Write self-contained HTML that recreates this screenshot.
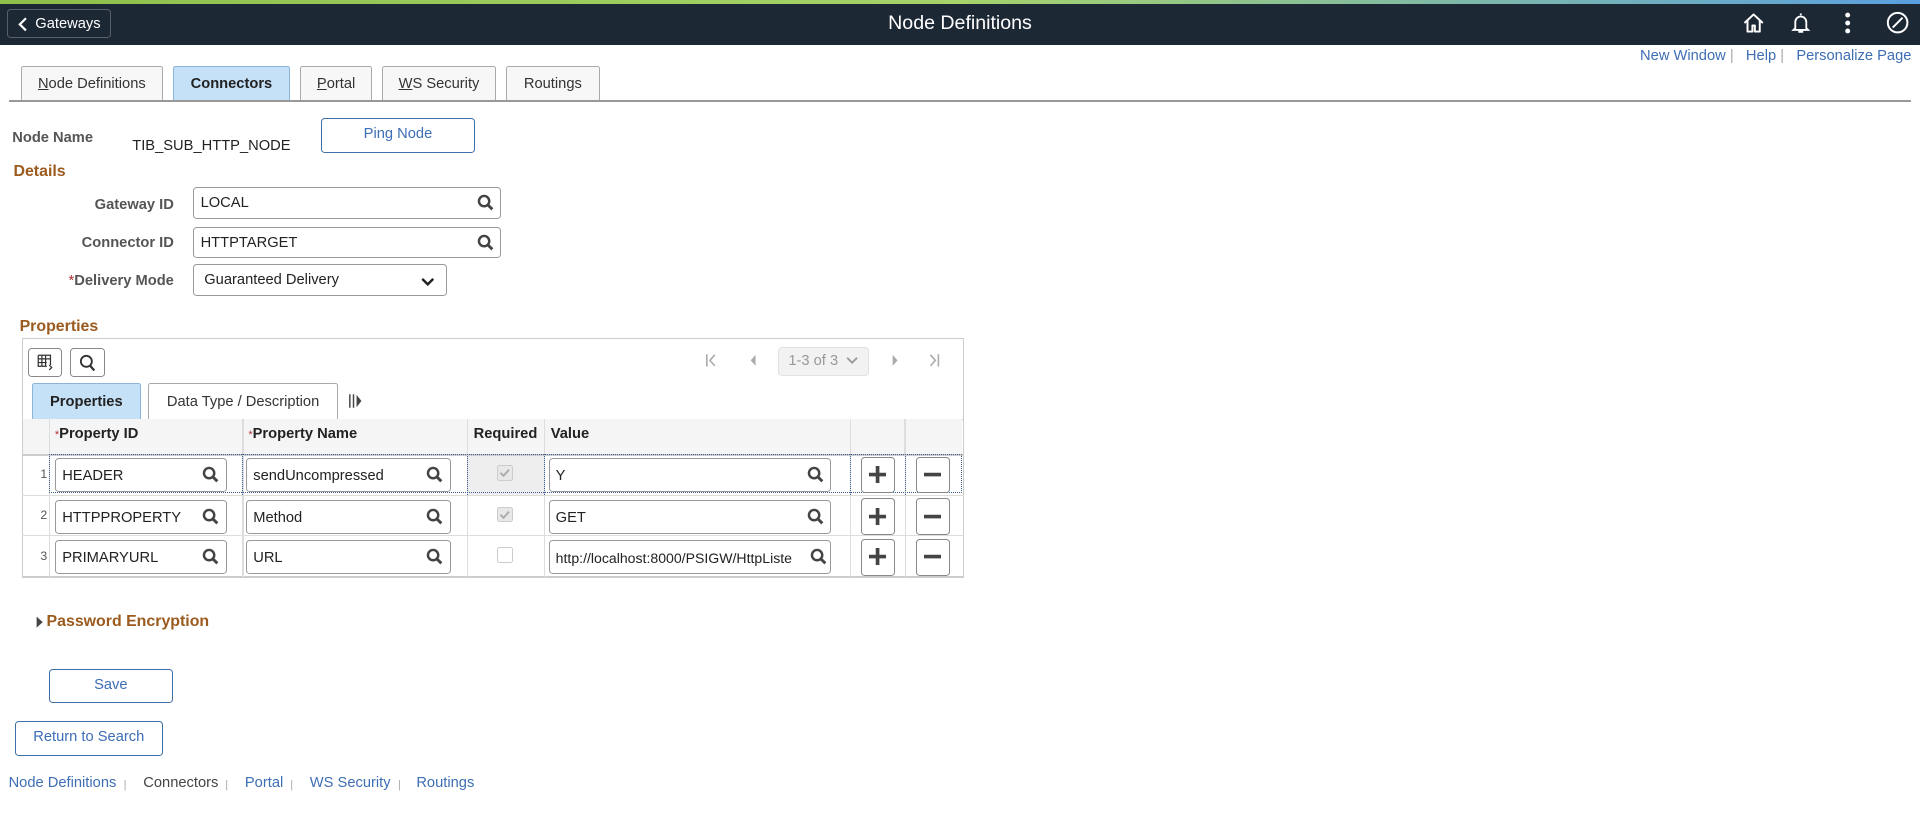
<!DOCTYPE html>
<html><head><meta charset="utf-8"><style>
html,body{margin:0;padding:0;background:#fff;overflow:hidden;width:1920px;height:831px}
#w{position:relative;width:1568px;height:679px;zoom:1.2245;font-family:"Liberation Sans",Arial,sans-serif;font-size:12px;color:#333}
.a{position:absolute}
.hdr{left:0;top:0;width:1568px;height:37px;background:#1d2835}
.stripe{left:0;top:0;width:1568px;height:3px;background:linear-gradient(90deg,#8cc04a,#a6d36a 50%,#5aa0e0)}
.gw{left:6px;top:7px;width:85px;height:24px;border:1px solid #56606d;border-radius:3px;color:#fff;font-size:12px;line-height:24px;box-sizing:border-box;padding-left:22px}
.title{left:0;top:0;width:1568px;text-align:center;color:#fff;font-size:16px;line-height:38px}
.lnk{color:#3e6eb5}
.tab{top:54px;height:29px;border:1px solid #aaa;border-bottom:none;background:#f7f7f7;box-sizing:border-box;text-align:center;line-height:28px;font-size:12px;color:#333;border-radius:2px 2px 0 0}
.tab.on{background:#c5e1f8;font-weight:bold;border-color:#8ab4d8;color:#222}
.lbl{font-weight:bold;color:#555;text-align:right}
.inp{border:1px solid #999;border-radius:3px;box-sizing:border-box;background:#fff;height:26px;line-height:26px;padding-left:5px;color:#222}
.btn{border:1px solid #3e6ea8;border-radius:3px;box-sizing:border-box;color:#3e6eb5;text-align:center;background:#fff}
.sec{color:#9b5a1e;font-weight:bold;font-size:13px}
.mg{position:absolute;right:5px;top:5px}
.th{top:342px;height:29px;line-height:26px;font-weight:bold;color:#222;background:#f5f5f5}
.pm{width:28px;height:30px;border:1px solid #888;border-radius:3px;box-sizing:border-box;background:#fff}
.sep{color:#aaa;font-size:9px}
</style></head><body><div id="w">
<div class="a hdr"></div><div class="a stripe"></div>
<div class="a gw"><svg class="a" style="left:8px;top:6px" width="8" height="12" viewBox="0 0 8 12"><path d="M6.5 1L1.5 6l5 5" stroke="#fff" stroke-width="1.8" fill="none"/></svg>Gateways</div>
<div class="a title">Node Definitions</div>
<svg class="a" style="left:1423px;top:10px" width="19" height="18" viewBox="0 0 19 18"><path d="M2 9L9.5 2 17 9M4.5 7v9h4v-5h2v5h4V7" stroke="#fff" stroke-width="1.6" fill="none" stroke-linejoin="round"/></svg>
<svg class="a" style="left:1463px;top:9px" width="16" height="19" viewBox="0 0 16 19"><path d="M8 2v1.5M3.5 14V9a4.5 4.5 0 019 0v5l1.5 1.5H2L3.5 14zM6 17h4" stroke="#fff" stroke-width="1.5" fill="none"/></svg>
<svg class="a" style="left:1506px;top:10px" width="6" height="18"><circle cx="3" cy="2.5" r="2" fill="#fff"/><circle cx="3" cy="9" r="2" fill="#fff"/><circle cx="3" cy="15.5" r="2" fill="#fff"/></svg>
<svg class="a" style="left:1540px;top:9px" width="19" height="19" viewBox="0 0 19 19"><circle cx="9.5" cy="9.5" r="8" stroke="#fff" stroke-width="1.6" fill="none"/><path d="M13.5 5.5L5.5 13.5" stroke="#fff" stroke-width="1.6"/></svg>
<div class="a" style="right:7px;top:39px;font-size:12px"><span class="lnk">New Window</span> <span style="color:#aaa">|</span> &nbsp; <span class="lnk">Help</span> <span style="color:#aaa">|</span> &nbsp; <span class="lnk">Personalize Page</span></div>
<div class="a tab" style="left:17px;width:116px"><u>N</u>ode Definitions</div>
<div class="a tab on" style="left:141px;width:96px">Connectors</div>
<div class="a tab" style="left:245px;width:59px"><u>P</u>ortal</div>
<div class="a tab" style="left:312px;width:93px"><u>W</u>S Security</div>
<div class="a tab" style="left:413px;width:77px">Routings</div>
<div class="a" style="left:7px;top:82px;width:1554px;height:1px;background:#999"></div>
<div class="a" style="left:10px;top:106px;font-weight:bold;color:#555">Node Name</div>
<div class="a" style="left:108px;top:113px;color:#222">TIB_SUB_HTTP_NODE</div>
<div class="a btn" style="left:262px;top:96px;width:126px;height:29px;line-height:26px">Ping Node</div>
<div class="a sec" style="left:11px;top:133px">Details</div>
<div class="a lbl" style="left:20px;width:122px;top:161px">Gateway ID</div>
<div class="a inp" style="left:158px;top:153px;width:251px">LOCAL<svg class="mg" width="14" height="14" viewBox="0 0 14 14"><circle cx="5.8" cy="5.8" r="4.2" stroke="#444" stroke-width="2" fill="none"/><path d="M9 9l3.5 3.5" stroke="#444" stroke-width="2.4"/></svg></div>
<div class="a lbl" style="left:20px;width:122px;top:192px">Connector ID</div>
<div class="a inp" style="left:158px;top:185px;width:251px">HTTPTARGET<svg class="mg" width="14" height="14" viewBox="0 0 14 14"><circle cx="5.8" cy="5.8" r="4.2" stroke="#444" stroke-width="2" fill="none"/><path d="M9 9l3.5 3.5" stroke="#444" stroke-width="2.4"/></svg></div>
<div class="a lbl" style="left:20px;width:122px;top:223px"><span style="color:#b03030;font-weight:normal">*</span>Delivery Mode</div>
<div class="a inp" style="left:158px;top:216px;width:207px;padding-left:8px">Guaranteed Delivery<svg class="a" style="right:9px;top:9px" width="11" height="8" viewBox="0 0 11 8"><path d="M1 1.5l4.5 4.5L10 1.5" stroke="#222" stroke-width="2" fill="none"/></svg></div>
<div class="a sec" style="left:16px;top:260px">Properties</div>
<div class="a" style="left:18px;top:276px;width:769px;height:196px;border:1px solid #ccc;box-sizing:border-box"></div>
<div class="a" style="left:23px;top:284px;width:28px;height:24px;border:1px solid #888;border-radius:3px;box-sizing:border-box"><svg class="a" style="left:6px;top:4px" width="14" height="14" viewBox="0 0 14 14"><path d="M1 1h10v8M1 1v9h7M1 4h10M1 7h7M4 1v9M7 1v9M10 9l2 2-2 2" stroke="#333" stroke-width="1" fill="none"/></svg></div>
<div class="a" style="left:57px;top:284px;width:29px;height:24px;border:1px solid #888;border-radius:3px;box-sizing:border-box"><svg class="a" style="left:7px;top:4px" width="14" height="15" viewBox="0 0 14 15"><circle cx="6" cy="6" r="4.5" stroke="#333" stroke-width="1.5" fill="none"/><path d="M9 9.5l3.5 4" stroke="#333" stroke-width="1.8"/></svg></div>
<svg class="a" style="left:576px;top:288px" width="10" height="12"><path d="M1.5 1v10M8 1.5L4 6l4 4.5" stroke="#aaa" stroke-width="1.3" fill="none"/></svg>
<svg class="a" style="left:610px;top:288px" width="10" height="12"><path d="M7 1.5L3 6l4 4.5z" fill="#aaa"/></svg>
<div class="a" style="left:635px;top:283px;width:75px;height:24px;background:#f2f2f2;border:1px solid #e2e2e2;border-radius:3px;box-sizing:border-box;color:#999;line-height:22px;padding-left:8px">1-3 of 3 <svg width="10" height="7" viewBox="0 0 10 7" style="margin-left:3px"><path d="M1 1.5l4 4 4-4" stroke="#999" stroke-width="1.5" fill="none"/></svg></div>
<svg class="a" style="left:726px;top:288px" width="10" height="12"><path d="M3 1.5L7 6l-4 4.5z" fill="#aaa"/></svg>
<svg class="a" style="left:758px;top:288px" width="10" height="12"><path d="M8.5 1v10M2 1.5L6 6l-4 4.5" stroke="#aaa" stroke-width="1.3" fill="none"/></svg>
<div class="a tab on" style="left:26px;top:313px;width:89px;height:30px;line-height:30px">Properties</div>
<div class="a tab" style="left:121px;top:313px;width:155px;height:30px;line-height:30px;background:#fff">Data Type / Description</div>
<svg class="a" style="left:284px;top:321px" width="12" height="13"><path d="M1.5 1v11M4.5 1v11" stroke="#444" stroke-width="1.2"/><path d="M7 1.5l4 5-4 5z" fill="#444"/></svg>
<div class="a" style="left:18px;top:342px;width:769px;height:1px;background:#ccc"></div>
<div class="a th" style="left:19px;width:767px"></div>
<div class="a th" style="left:40px;width:158px;padding-left:4px;border-left:1px solid #ddd;box-sizing:border-box"><span style="color:#b03030;font-weight:normal;font-size:9px">*</span>Property ID</div>
<div class="a th" style="left:198px;width:183px;padding-left:4px;border-left:1px solid #ddd;box-sizing:border-box"><span style="color:#b03030;font-weight:normal;font-size:9px">*</span>Property Name</div>
<div class="a th" style="left:381px;width:63px;padding-left:5px;border-left:1px solid #ddd;box-sizing:border-box">Required</div>
<div class="a th" style="left:444px;width:250px;padding-left:5px;border-left:1px solid #ddd;box-sizing:border-box">Value</div>
<div class="a th" style="left:694px;width:45px;border-left:1px solid #ddd;border-right:1px solid #ddd;box-sizing:border-box"></div>
<div class="a" style="left:18px;top:371px;width:769px;height:1px;background:#ccc"></div>
<div class="a" style="left:18px;top:404px;width:769px;height:1px;background:#ddd"></div>
<div class="a" style="left:18px;top:437px;width:769px;height:1px;background:#ddd"></div>
<div class="a" style="left:18px;top:470px;width:769px;height:2px;background:#ccc"></div>
<div class="a" style="left:40px;top:342px;width:1px;height:129px;background:#ddd"></div>
<div class="a" style="left:198px;top:342px;width:1px;height:129px;background:#ddd"></div>
<div class="a" style="left:381px;top:342px;width:1px;height:129px;background:#ddd"></div>
<div class="a" style="left:444px;top:342px;width:1px;height:129px;background:#ddd"></div>
<div class="a" style="left:694px;top:342px;width:1px;height:129px;background:#ddd"></div>
<div class="a" style="left:739px;top:342px;width:1px;height:129px;background:#ddd"></div>
<div class="a" style="left:382px;top:372px;width:62px;height:32px;background:#eee"></div>
<div class="a" style="left:40px;top:371px;width:746px;height:32px;border:1px dotted #3a5f94;box-sizing:border-box"></div>
<div class="a" style="left:198px;top:371px;width:1px;height:33px;border-left:1px dotted #3a5f94"></div>
<div class="a" style="left:381px;top:371px;width:1px;height:33px;border-left:1px dotted #3a5f94"></div>
<div class="a" style="left:444px;top:371px;width:1px;height:33px;border-left:1px dotted #3a5f94"></div>
<div class="a" style="left:694px;top:371px;width:1px;height:33px;border-left:1px dotted #3a5f94"></div>
<div class="a" style="left:739px;top:371px;width:1px;height:33px;border-left:1px dotted #3a5f94"></div>

<div class="a" style="left:33px;top:381px;font-size:10px;color:#555">1</div>
<div class="a" style="left:33px;top:415px;font-size:10px;color:#555">2</div>
<div class="a" style="left:33px;top:448px;font-size:10px;color:#555">3</div>

<div class="a inp" style="left:45px;top:374px;width:140px;height:28px;line-height:28px">HEADER<svg class="mg" style="top:6px" width="14" height="14" viewBox="0 0 14 14"><circle cx="5.8" cy="5.8" r="4.2" stroke="#444" stroke-width="2" fill="none"/><path d="M9 9l3.5 3.5" stroke="#444" stroke-width="2.4"/></svg></div>
<div class="a inp" style="left:45px;top:408px;width:140px;height:28px;line-height:28px">HTTPPROPERTY<svg class="mg" style="top:6px" width="14" height="14" viewBox="0 0 14 14"><circle cx="5.8" cy="5.8" r="4.2" stroke="#444" stroke-width="2" fill="none"/><path d="M9 9l3.5 3.5" stroke="#444" stroke-width="2.4"/></svg></div>
<div class="a inp" style="left:45px;top:441px;width:140px;height:28px;line-height:28px">PRIMARYURL<svg class="mg" style="top:6px" width="14" height="14" viewBox="0 0 14 14"><circle cx="5.8" cy="5.8" r="4.2" stroke="#444" stroke-width="2" fill="none"/><path d="M9 9l3.5 3.5" stroke="#444" stroke-width="2.4"/></svg></div>

<div class="a inp" style="left:201px;top:374px;width:167px;height:28px;line-height:28px">sendUncompressed<svg class="mg" style="top:6px" width="14" height="14" viewBox="0 0 14 14"><circle cx="5.8" cy="5.8" r="4.2" stroke="#444" stroke-width="2" fill="none"/><path d="M9 9l3.5 3.5" stroke="#444" stroke-width="2.4"/></svg></div>
<div class="a inp" style="left:201px;top:408px;width:167px;height:28px;line-height:28px">Method<svg class="mg" style="top:6px" width="14" height="14" viewBox="0 0 14 14"><circle cx="5.8" cy="5.8" r="4.2" stroke="#444" stroke-width="2" fill="none"/><path d="M9 9l3.5 3.5" stroke="#444" stroke-width="2.4"/></svg></div>
<div class="a inp" style="left:201px;top:441px;width:167px;height:28px;line-height:28px">URL<svg class="mg" style="top:6px" width="14" height="14" viewBox="0 0 14 14"><circle cx="5.8" cy="5.8" r="4.2" stroke="#444" stroke-width="2" fill="none"/><path d="M9 9l3.5 3.5" stroke="#444" stroke-width="2.4"/></svg></div>

<div class="a" style="left:406px;top:380px;width:11px;height:11px;border:1px solid #ccc;background:#e8e8e8;border-radius:2px"><svg width="11" height="11"><path d="M2 5.5l2.5 2.5L9 3" stroke="#aaa" stroke-width="1.5" fill="none"/></svg></div>
<div class="a" style="left:406px;top:414px;width:11px;height:11px;border:1px solid #ccc;background:#e8e8e8;border-radius:2px"><svg width="11" height="11"><path d="M2 5.5l2.5 2.5L9 3" stroke="#aaa" stroke-width="1.5" fill="none"/></svg></div>
<div class="a" style="left:406px;top:447px;width:11px;height:11px;border:1px solid #ccc;background:#fff;border-radius:2px"></div>

<div class="a inp" style="left:448px;top:374px;width:231px;height:28px;line-height:28px">Y<svg class="mg" style="top:6px" width="14" height="14" viewBox="0 0 14 14"><circle cx="5.8" cy="5.8" r="4.2" stroke="#444" stroke-width="2" fill="none"/><path d="M9 9l3.5 3.5" stroke="#444" stroke-width="2.4"/></svg></div>
<div class="a inp" style="left:448px;top:408px;width:231px;height:28px;line-height:28px">GET<svg class="mg" style="top:6px" width="14" height="14" viewBox="0 0 14 14"><circle cx="5.8" cy="5.8" r="4.2" stroke="#444" stroke-width="2" fill="none"/><path d="M9 9l3.5 3.5" stroke="#444" stroke-width="2.4"/></svg></div>
<div class="a inp" style="left:448px;top:441px;width:231px;height:28px;line-height:28px;font-size:11.5px;white-space:nowrap;overflow:hidden">http://localhost:8000/PSIGW/HttpListe<svg class="mg" style="top:6px;right:3px;background:#fff" width="14" height="14" viewBox="0 0 14 14"><circle cx="5.8" cy="5.8" r="4.2" stroke="#444" stroke-width="2" fill="none"/><path d="M9 9l3.5 3.5" stroke="#444" stroke-width="2.4"/></svg></div>

<div class="a pm" style="left:703px;top:373px"><svg class="a" style="left:6px;top:7px" width="14" height="14"><path d="M7 0v14M0 7h14" stroke="#444" stroke-width="3"/></svg></div>
<div class="a pm" style="left:703px;top:407px"><svg class="a" style="left:6px;top:7px" width="14" height="14"><path d="M7 0v14M0 7h14" stroke="#444" stroke-width="3"/></svg></div>
<div class="a pm" style="left:703px;top:440px"><svg class="a" style="left:6px;top:7px" width="14" height="14"><path d="M7 0v14M0 7h14" stroke="#444" stroke-width="3"/></svg></div>
<div class="a pm" style="left:748px;top:373px"><svg class="a" style="left:6px;top:7px" width="14" height="14"><path d="M0 7h14" stroke="#444" stroke-width="3"/></svg></div>
<div class="a pm" style="left:748px;top:407px"><svg class="a" style="left:6px;top:7px" width="14" height="14"><path d="M0 7h14" stroke="#444" stroke-width="3"/></svg></div>
<div class="a pm" style="left:748px;top:440px"><svg class="a" style="left:6px;top:7px" width="14" height="14"><path d="M0 7h14" stroke="#444" stroke-width="3"/></svg></div>

<svg class="a" style="left:29px;top:503px" width="6" height="10"><path d="M0.5 0.5l5 4.5-5 4.5z" fill="#444"/></svg>
<div class="a sec" style="left:38px;top:501px">Password Encryption</div>
<div class="a btn" style="left:40px;top:546px;width:101px;height:28px;line-height:26px">Save</div>
<div class="a btn" style="left:12px;top:589px;width:121px;height:28px;line-height:26px">Return to Search</div>
<div class="a lnk" style="left:7px;top:633px">Node Definitions</div><div class="a sep" style="left:101px;top:636px">|</div>
<div class="a" style="left:117px;top:633px;color:#444">Connectors</div><div class="a sep" style="left:184px;top:636px">|</div>
<div class="a lnk" style="left:200px;top:633px">Portal</div><div class="a sep" style="left:237px;top:636px">|</div>
<div class="a lnk" style="left:253px;top:633px">WS Security</div><div class="a sep" style="left:325px;top:636px">|</div>
<div class="a lnk" style="left:340px;top:633px">Routings</div>
</div></body></html>
